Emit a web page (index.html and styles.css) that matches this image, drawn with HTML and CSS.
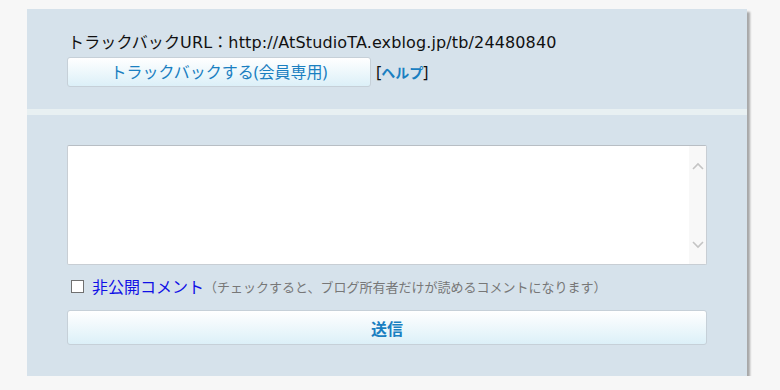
FILE: index.html
```html
<!DOCTYPE html>
<html lang="ja">
<head>
<meta charset="utf-8">
<link rel="stylesheet" href="styles.css">
</head>
<body>
<div class="panel">
  <div class="tb">
    <div class="tb-url">トラックバックURL：http://AtStudioTA.exblog.jp/tb/24480840</div>
    <div class="tb-row">
      <button class="btn tb-btn">トラックバックする(会員専用)</button>
      <span class="help">[<a class="help-link">ヘルプ</a>]</span>
    </div>
  </div>
  <div class="sep"></div>
  <div class="cm">
    <div class="ta">
      <div class="ta-body"></div>
      <div class="ta-scroll">
        <svg width="12" height="8" viewBox="0 0 12 8"><path d="M1 7 L6 2 L11 7" fill="none" stroke="#c4c4c4" stroke-width="1.6"/></svg>
        <svg width="12" height="8" viewBox="0 0 12 8"><path d="M1 1 L6 6 L11 1" fill="none" stroke="#c4c4c4" stroke-width="1.6"/></svg>
      </div>
    </div>
    <div class="chk-row">
      <span class="chk"></span>
      <span class="chk-label">非公開コメント</span>
      <span class="chk-note">（チェックすると、ブログ所有者だけが読めるコメントになります）</span>
    </div>
    <button class="btn send">送信</button>
  </div>
</div>
</body>
</html>
```

FILE: styles.css
```css
html, body {
  margin: 0;
  padding: 0;
  background: #f7f7f7;
}
body {
  font-family: "Noto Sans", "Noto Sans CJK JP", sans-serif;
  color: #111;
}
.panel {
  margin: 9px 0 0 27px;
  width: 720px;
  height: 367px;
  background: #d6e2eb;
  box-shadow: 3px 3px 2px #a8a8a8;
  display: flex;
  flex-direction: column;
}
.tb {
  height: 100px;
  padding: 0 0 0 41px;
  box-sizing: border-box;
}
.tb-url {
  font-family: "DejaVu Sans", "Noto Sans CJK JP", sans-serif;
  font-size: 16px;
  line-height: 20px;
  letter-spacing: 0.13px;
  padding-top: 24px;
  color: #111;
}
.tb-row {
  display: flex;
  align-items: center;
  margin-top: 4px;
  margin-left: -1px;
}
.btn {
  font-family: inherit;
  border: 1px solid #c6d0d8;
  border-radius: 3px;
  background: linear-gradient(#ffffff, #dcf0f8);
  color: #1a7fc1;
  padding: 0;
  margin: 0;
}
.tb-btn {
  width: 304px;
  height: 30px;
  font-size: 16px;
  line-height: 28px;
}
.help {
  margin-left: 5px;
  font-size: 16px;
  color: #111;
}
.help-link {
  color: #1a7fc1;
  font-weight: bold;
  font-size: 14px;
}
.sep {
  height: 6px;
  background: #e8f0f2;
}
.cm {
  padding: 30px 0 0 40px;
}
.ta {
  width: 640px;
  height: 120px;
  box-sizing: border-box;
  background: #fff;
  border: 1px solid #c8ced4;
  border-top-color: #b8bec4;
  border-radius: 2px;
  display: flex;
}
.ta-body {
  flex: 1;
}
.ta-scroll {
  width: 17px;
  background: #f8f8f8;
  display: flex;
  flex-direction: column;
  justify-content: space-between;
  align-items: center;
  padding: 16px 0 15px;
}
.chk-row {
  display: flex;
  align-items: center;
  height: 20px;
  margin-top: 11px;
  padding-left: 4px;
}
.chk {
  width: 11px;
  height: 11px;
  border: 1px solid #707070;
  background: #fff;
}
.chk-label {
  margin-left: 8px;
  color: #1010e6;
  font-size: 16px;
}
.chk-note {
  color: #777;
  font-size: 13px;
  margin-left: 0;
}
.send {
  display: block;
  margin-top: 14px;
  width: 640px;
  height: 35px;
  font-size: 16px;
  font-weight: bold;
}
```
